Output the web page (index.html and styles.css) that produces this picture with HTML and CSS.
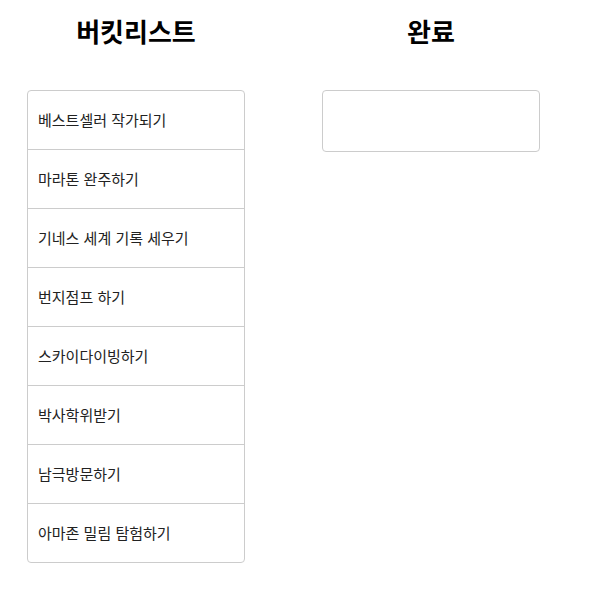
FILE: index.html
```html
<!DOCTYPE html>
<html lang="ko">
<head>
<meta charset="utf-8">
<link rel="stylesheet" href="styles.css">
</head>
<body>
<div class="board">
  <section class="column">
    <h1 class="title">버킷리스트</h1>
    <ul class="list">
      <li class="item">베스트셀러 작가되기</li>
      <li class="item">마라톤 완주하기</li>
      <li class="item">기네스 세계 기록 세우기</li>
      <li class="item">번지점프 하기</li>
      <li class="item">스카이다이빙하기</li>
      <li class="item">박사학위받기</li>
      <li class="item">남극방문하기</li>
      <li class="item">아마존 밀림 탐험하기</li>
    </ul>
  </section>
  <section class="column">
    <h1 class="title">완료</h1>
    <ul class="list list-empty"></ul>
  </section>
</div>
</body>
</html>
```
FILE: styles.css
```css
html, body {
  margin: 0;
  padding: 0;
  background: #fff;
}
body {
  font-family: "Noto Sans CJK KR", "Noto Sans", sans-serif;
  color: #222;
}
.board {
  display: flex;
  gap: 77px;
  padding-left: 27px;
  padding-top: 12px;
}
.column {
  width: 218px;
}
.title {
  margin: 0 0 40px;
  font-size: 26px;
  line-height: 38px;
  font-weight: 700;
  text-align: center;
  color: #000;
}
.list {
  list-style: none;
  margin: 0;
  padding: 0;
  border: 1px solid #cccccc;
  border-radius: 4px;
}
.item {
  font-size: 15px;
  line-height: 20px;
  padding: 19px 10px;
  border-bottom: 1px solid #cccccc;
  font-weight: 400;
}
.item:last-child {
  border-bottom: none;
}
.list-empty {
  height: 60px;
}
```
